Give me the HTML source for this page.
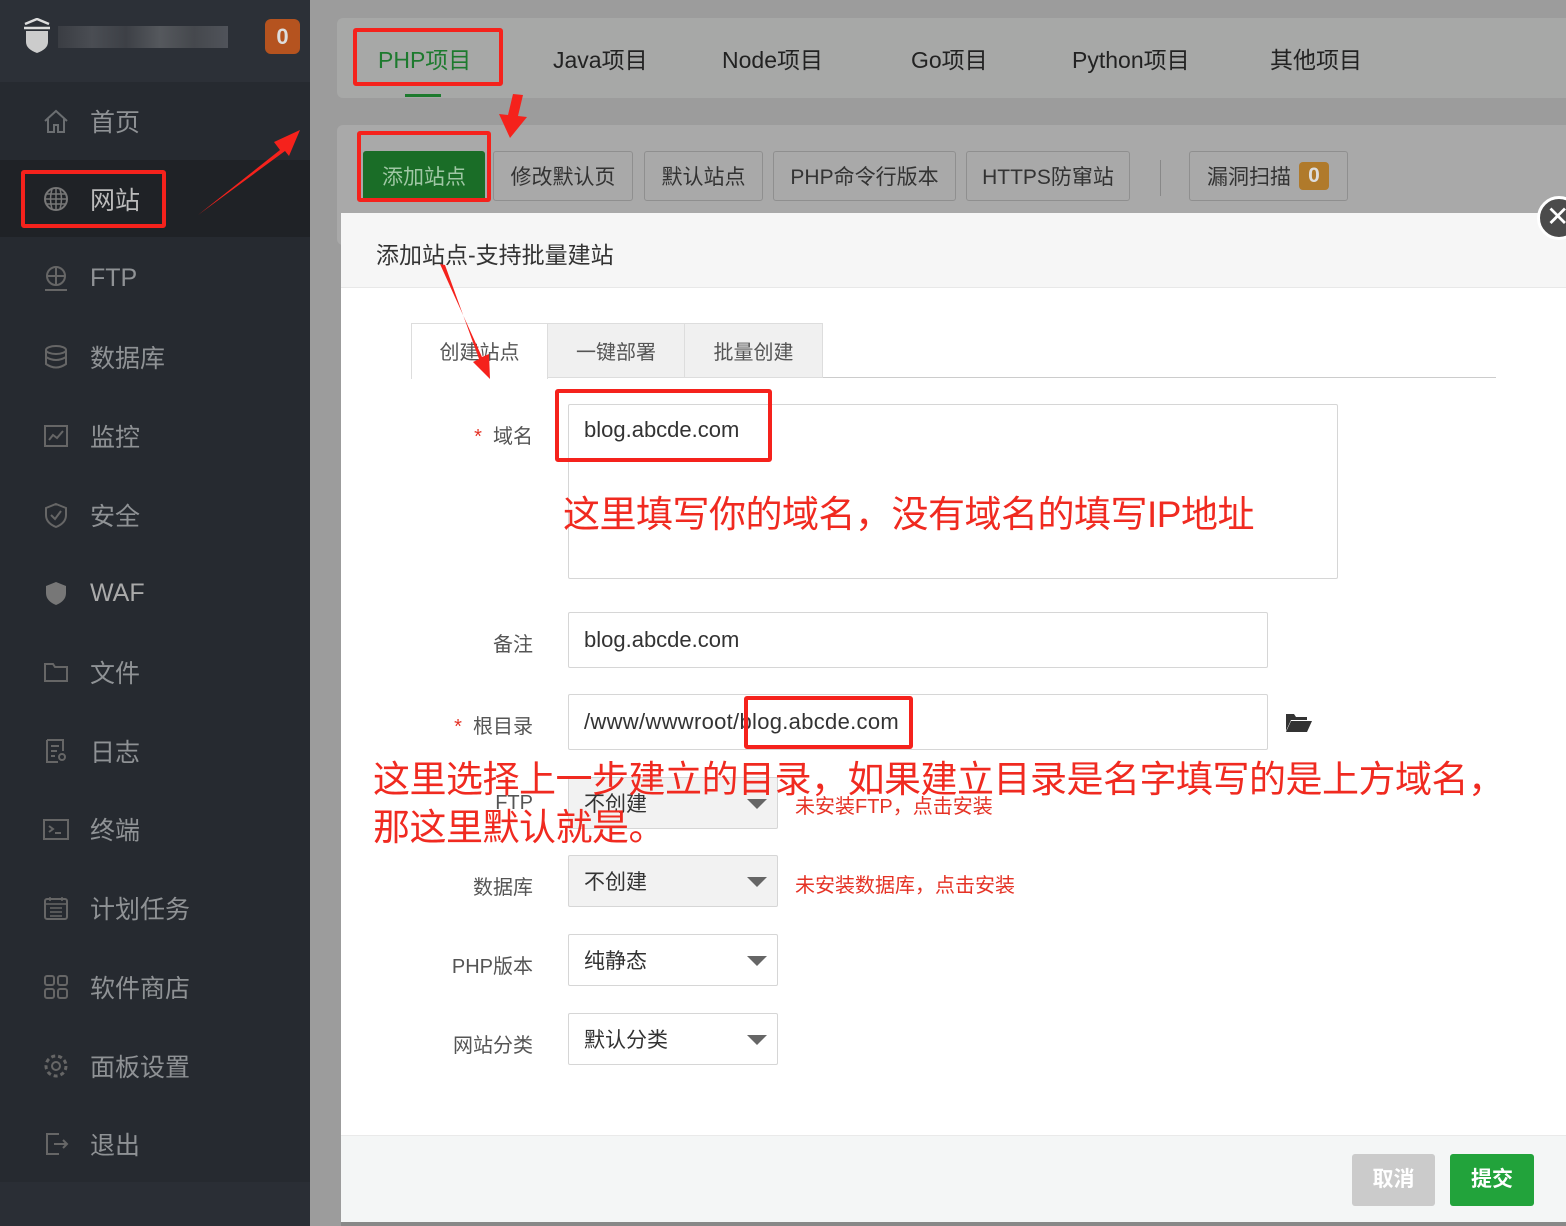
<!DOCTYPE html>
<html><head><meta charset="utf-8"><style>
*{margin:0;padding:0;box-sizing:border-box}
body{width:1566px;height:1226px;overflow:hidden;position:relative;background:#9c9c9c;font-family:"Liberation Sans","Noto Sans CJK SC",sans-serif}
.a{position:absolute}
.side{left:0;top:0;width:310px;height:1226px;background:#262a30}
.mi{position:absolute;left:42px;height:40px;display:flex;align-items:center;color:#8f9295;font-size:25px}
.mi svg{width:28px;height:28px;margin-right:20px}
.tab{position:absolute;top:41px;font-size:23px;color:#222}
.btn{position:absolute;top:151px;height:50px;border:1px solid #8f8f8f;border-radius:3px;background:#a9a9a9;color:#333;font-size:21px;display:flex;align-items:center;justify-content:center}
.lbl{position:absolute;right:1033px;font-size:20px;color:#555;text-align:right}
.inp{position:absolute;left:568px;border:1px solid #d6d6d6;border-radius:2px;background:#fff;font-size:22px;color:#333;padding-left:15px;display:flex;align-items:center}
.sel{background:#f2f2f2;width:210px;height:52px;font-size:21px}
.sel:after{content:"";position:absolute;right:10px;top:21px;border-left:10px solid transparent;border-right:10px solid transparent;border-top:10px solid #666}
.red{position:absolute;border:4px solid #f5221c;border-radius:3px}
.rt{position:absolute;color:#f02a20;font-size:37px;white-space:nowrap;letter-spacing:-0.5px}
.hint{position:absolute;left:795px;color:#e53225;font-size:20px}
</style></head><body>
<div class="a side"></div>
<div class="a" style="left:0;top:0;width:310px;height:82px;background:#2c3037"></div>
<svg class="a" style="left:22px;top:18px" width="30" height="36" viewBox="0 0 30 36"><path d="M3 6 L15 1 L27 6 M2 10 L28 10" stroke="#ddd" stroke-width="2.5" fill="none"/><path d="M4 13 H26 V24 Q26 31 15 35 Q4 31 4 24Z" fill="#ccc"/></svg>
<div class="a" style="left:58px;top:26px;width:170px;height:22px;background:linear-gradient(90deg,#3a3d43,#4a4d53 20%,#3d4046 40%,#55585d 60%,#45484d 80%,#50535a)"></div>
<div class="a" style="left:265px;top:19px;width:35px;height:35px;border-radius:6px;background:#b5531f;color:#ddd;font-size:22px;font-weight:bold;text-align:center;line-height:35px">0</div>
<div class="a" style="left:0;top:160px;width:310px;height:77px;background:#1f2226"></div>
<div class="a" style="left:0;top:1182px;width:310px;height:44px;background:#2a2e35"></div>
<div class="mi" style="top:101px"><svg viewBox="0 0 28 28"><path d="M3 14 L14 4 L25 14 M6 12 V25 H12 V18 H16 V25 H22 V12" stroke="#6b6e71" stroke-width="2" fill="none"/></svg>首页</div>
<div class="mi" style="top:179px;color:#bbb"><svg viewBox="0 0 28 28"><circle cx="14" cy="14" r="11" stroke="#777" stroke-width="2" fill="none"/><path d="M3 14H25M14 3V25M5 9H23M5 19H23M10 4Q7 14 10 24M18 4Q21 14 18 24" stroke="#777" stroke-width="1.5" fill="none"/></svg>网站</div>
<div class="mi" style="top:258px"><svg viewBox="0 0 28 28"><circle cx="14" cy="12" r="9" stroke="#666" stroke-width="2" fill="none"/><path d="M5 12H23M14 3V21M3 26H25" stroke="#666" stroke-width="2" fill="none"/></svg>FTP</div>
<div class="mi" style="top:337px"><svg viewBox="0 0 28 28"><ellipse cx="14" cy="7" rx="10" ry="4" stroke="#666" stroke-width="2" fill="none"/><path d="M4 7V21Q14 28 24 21V7M4 14Q14 20 24 14" stroke="#666" stroke-width="2" fill="none"/></svg>数据库</div>
<div class="mi" style="top:416px"><svg viewBox="0 0 28 28"><rect x="3" y="4" width="22" height="20" stroke="#666" stroke-width="2" fill="none"/><path d="M7 18L11 13L15 16L21 9" stroke="#666" stroke-width="2" fill="none"/></svg>监控</div>
<div class="mi" style="top:495px"><svg viewBox="0 0 28 28"><path d="M14 3L24 7V14Q24 22 14 26Q4 22 4 14V7Z M9 14L13 18L19 10" stroke="#666" stroke-width="2" fill="none"/></svg>安全</div>
<div class="mi" style="top:573px;color:#aaa"><svg viewBox="0 0 28 28"><path d="M14 3L24 7V14Q24 22 14 26Q4 22 4 14V7Z" fill="#777"/></svg>WAF</div>
<div class="mi" style="top:652px"><svg viewBox="0 0 28 28"><path d="M3 6H11L13 9H25V23H3Z" stroke="#666" stroke-width="2" fill="none"/></svg>文件</div>
<div class="mi" style="top:731px"><svg viewBox="0 0 28 28"><path d="M5 3H21V14M5 3V25H16M9 9H17M9 14H15M9 19H13" stroke="#666" stroke-width="2" fill="none"/><circle cx="20" cy="20" r="3" stroke="#666" stroke-width="2" fill="none"/></svg>日志</div>
<div class="mi" style="top:809px"><svg viewBox="0 0 28 28"><rect x="2" y="5" width="24" height="19" stroke="#666" stroke-width="2" fill="none"/><path d="M7 11L11 14L7 17M13 18H19" stroke="#666" stroke-width="2" fill="none"/></svg>终端</div>
<div class="mi" style="top:888px"><svg viewBox="0 0 28 28"><rect x="3" y="5" width="22" height="20" rx="2" stroke="#666" stroke-width="2" fill="none"/><path d="M3 10H25M8 3V7M20 3V7M8 14H20M8 18H20M8 22H20" stroke="#666" stroke-width="1.5" fill="none"/></svg>计划任务</div>
<div class="mi" style="top:967px"><svg viewBox="0 0 28 28"><rect x="3" y="3" width="9" height="9" rx="2" stroke="#666" stroke-width="2" fill="none"/><rect x="16" y="3" width="9" height="9" rx="2" stroke="#666" stroke-width="2" fill="none"/><rect x="3" y="16" width="9" height="9" rx="2" stroke="#666" stroke-width="2" fill="none"/><rect x="16" y="16" width="9" height="9" rx="2" stroke="#666" stroke-width="2" fill="none"/></svg>软件商店</div>
<div class="mi" style="top:1046px"><svg viewBox="0 0 28 28"><circle cx="14" cy="14" r="4" stroke="#666" stroke-width="2" fill="none"/><circle cx="14" cy="14" r="10" stroke="#666" stroke-width="3" stroke-dasharray="4 3" fill="none"/></svg>面板设置</div>
<div class="mi" style="top:1124px"><svg viewBox="0 0 28 28"><path d="M17 4H5V24H17M12 14H25M21 10L25 14L21 18" stroke="#666" stroke-width="2" fill="none"/></svg>退出</div>

<div class="a" style="left:337px;top:18px;width:1240px;height:80px;background:#a7a8a7;border-radius:6px"></div>
<div class="tab" style="left:378px;color:#1d7a2e">PHP项目</div>
<div class="a" style="left:405px;top:94px;width:36px;height:3px;background:#1d7a2e"></div>
<div class="tab" style="left:553px">Java项目</div>
<div class="tab" style="left:722px">Node项目</div>
<div class="tab" style="left:911px">Go项目</div>
<div class="tab" style="left:1072px">Python项目</div>
<div class="tab" style="left:1270px">其他项目</div>

<div class="a" style="left:337px;top:125px;width:1240px;height:120px;background:#a9a9a9;border-radius:6px"></div>
<div class="btn" style="left:363px;width:122px;background:#1a6d27;border-color:#1a6d27;color:#9fc7a4">添加站点</div>
<div class="btn" style="left:493px;width:140px">修改默认页</div>
<div class="btn" style="left:644px;width:119px">默认站点</div>
<div class="btn" style="left:773px;width:183px">PHP命令行版本</div>
<div class="btn" style="left:966px;width:164px">HTTPS防窜站</div>
<div class="a" style="left:1160px;top:160px;width:1px;height:36px;background:#888"></div>
<div class="btn" style="left:1189px;width:159px;justify-content:flex-start;padding-left:17px">漏洞扫描<span style="margin-left:8px;background:#b07a2b;color:#ddd;border-radius:4px;width:30px;height:28px;text-align:center;font-weight:bold;line-height:28px">0</span></div>

<div class="a" style="left:341px;top:213px;width:1225px;height:1009px;background:#fff"></div>
<div class="a" style="left:341px;top:213px;width:1225px;height:75px;background:#f6f6f6;border-bottom:1px solid #e8e8e8"></div>
<div class="a" style="left:376px;top:236px;font-size:23px;color:#333">添加站点-支持批量建站</div>
<div class="a" style="left:1537px;top:196px;width:44px;height:44px;border-radius:50%;background:#4b4b4b;border:3px solid #fff;color:#fff;font-size:28px;line-height:36px;padding-left:6px">✕</div>

<div class="a" style="left:411px;top:377px;width:1085px;height:1px;background:#ccc"></div>
<div class="a" style="left:411px;top:323px;width:137px;height:56px;background:#fff;border:1px solid #ddd;border-bottom:none;font-size:20px;color:#555;text-align:center;line-height:58px">创建站点</div>
<div class="a" style="left:547px;top:323px;width:138px;height:55px;background:#f0f0f0;border:1px solid #ddd;font-size:20px;color:#555;text-align:center;line-height:58px">一键部署</div>
<div class="a" style="left:684px;top:323px;width:139px;height:55px;background:#f0f0f0;border:1px solid #ddd;font-size:20px;color:#555;text-align:center;line-height:58px">批量创建</div>

<div class="lbl" style="top:420px"><span style="color:#e53225">*</span>&nbsp; 域名</div>
<div class="inp" style="top:404px;width:770px;height:175px;align-items:flex-start;padding-top:12px">blog.abcde.com</div>
<div class="lbl" style="top:628px">备注</div>
<div class="inp" style="top:612px;width:700px;height:56px">blog.abcde.com</div>
<div class="lbl" style="top:710px"><span style="color:#e53225">*</span>&nbsp; 根目录</div>
<div class="inp" style="top:694px;width:700px;height:56px;letter-spacing:0.3px">/www/wwwroot/blog.abcde.com</div>
<svg class="a" style="left:1285px;top:711px" width="28" height="22" viewBox="0 0 28 22"><path d="M1 3H9L11 6H22V9H6L1 20Z" fill="#333"/><path d="M6 10H27L22 21H1Z" fill="#333"/></svg>
<div class="lbl" style="top:792px">FTP</div>
<div class="inp sel" style="top:777px">不创建</div>
<div class="hint" style="top:790px">未安装FTP，点击安装</div>
<div class="lbl" style="top:871px">数据库</div>
<div class="inp sel" style="top:855px">不创建</div>
<div class="hint" style="top:869px">未安装数据库，点击安装</div>
<div class="lbl" style="top:950px">PHP版本</div>
<div class="inp sel" style="top:934px;background:#fff">纯静态</div>
<div class="lbl" style="top:1029px">网站分类</div>
<div class="inp sel" style="top:1013px;background:#fff">默认分类</div>

<div class="a" style="left:341px;top:1135px;width:1225px;height:87px;background:#f4f6f6;border-top:1px solid #eaeaea"></div>
<div class="a" style="left:1352px;top:1154px;width:83px;height:52px;background:#cbcbcb;border-radius:3px;color:#fff;font-size:21px;font-weight:bold;text-align:center;line-height:52px">取消</div>
<div class="a" style="left:1450px;top:1154px;width:84px;height:52px;background:#22a33b;border-radius:3px;color:#fff;font-size:21px;font-weight:bold;text-align:center;line-height:52px">提交</div>
<div class="a" style="left:341px;top:1222px;width:1225px;height:4px;background:#888"></div>

<!-- annotations -->
<div class="red" style="left:21px;top:170px;width:145px;height:58px"></div>
<div class="red" style="left:353px;top:28px;width:150px;height:58px"></div>
<div class="red" style="left:357px;top:131px;width:134px;height:71px"></div>
<div class="red" style="left:555px;top:389px;width:217px;height:73px"></div>
<div class="red" style="left:744px;top:696px;width:169px;height:53px"></div>
<div class="rt" style="left:563px;top:484px">这里填写你的域名，没有域名的填写IP地址</div>
<div class="rt" style="left:373px;top:756px;line-height:48px">这里选择上一步建立的目录，如果建立目录是名字填写的是上方域名，<br>那这里默认就是。</div>
<svg class="a" style="left:0;top:0" width="1566" height="1226">
<polygon points="198,215 280,150 274,142 300,130 289,156 285,151" fill="#f5221c"/>
<polygon points="523,95 518,116 527,117 510,138 499,114 508,115 513,94" fill="#f5221c"/>
<polygon points="440,264 482,357 489,354 490,379 473,362 479,359 445,265" fill="#f5221c"/>
</svg>
</body></html>
